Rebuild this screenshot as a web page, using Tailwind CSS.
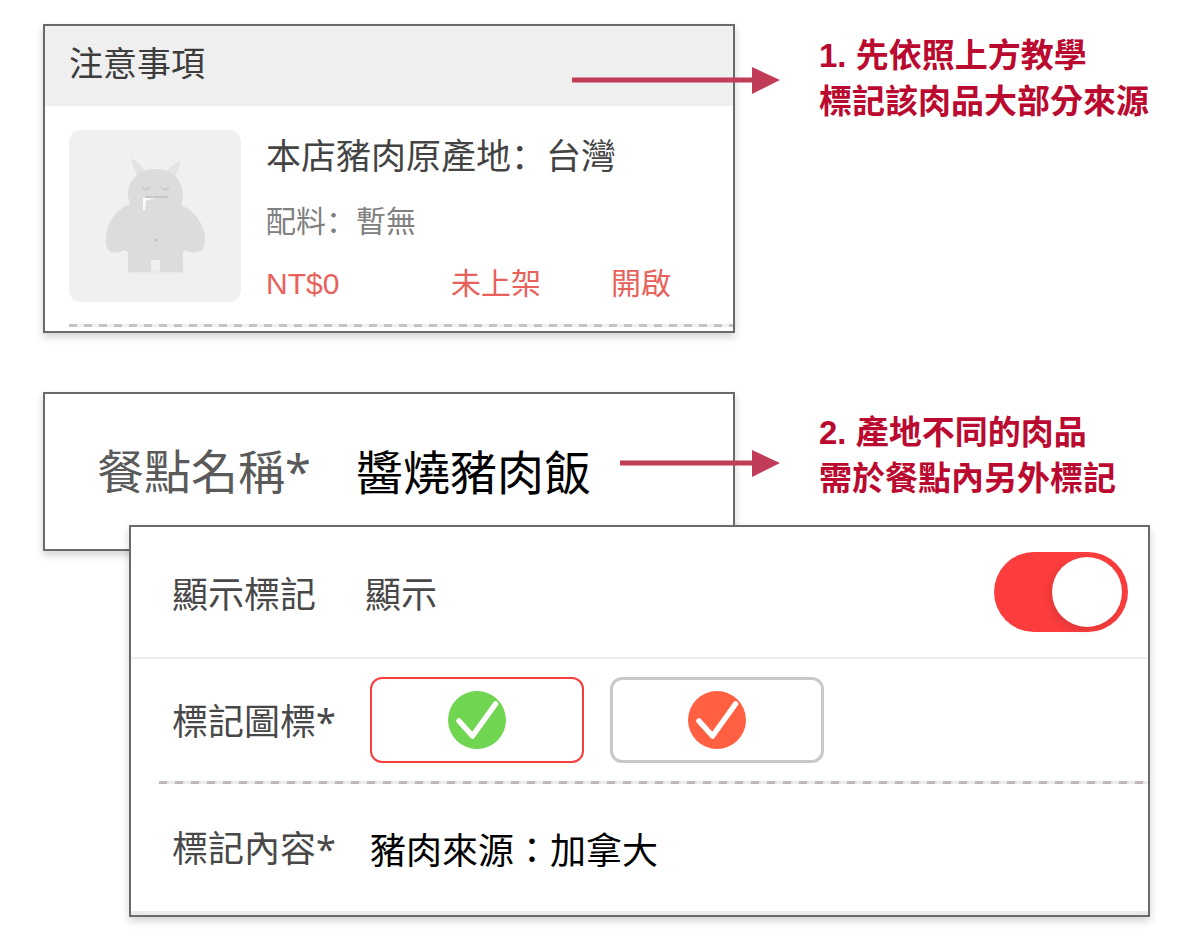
<!DOCTYPE html>
<html lang="zh-Hant">

<head>
  <meta charset="UTF-8">
  <meta name="viewport" content="width=device-width, initial-scale=1.0">
  <title>肉品來源標記教學</title>
  <script src="https://cdn.jsdelivr.net/npm/@tailwindcss/browser@4"></script>
</head>

<body class="bg-white font-['Liberation_Sans','Noto_Sans_CJK_TC',sans-serif]">
  <main class="pt-6 pb-4 pl-[43px] pr-[50px]">

    <!-- Step 1 -->
    <section class="flex gap-[84px]">
      <div class="relative flex-1 border-2 border-[#6a6a6c] bg-white shadow-[0_4px_8px_rgba(0,0,0,0.18)]">
        <h2 class="flex h-20 items-center bg-[#efefef] pb-1 pl-6 text-[34px] leading-10 text-[#3c3c3c]">注意事項</h2>
        <div class="ml-6 flex gap-[25px] pt-6 pb-5">
          <svg class="size-[172px] shrink-0 rounded-xl bg-[#f0f0f0]" viewBox="0 0 172 172" aria-hidden="true">
            <ellipse cx="86" cy="142" rx="32" ry="2" fill="#e9e9e9" />
            <path d="M62 28 Q70 32 77 42 L69 47 Q65 40 62 28Z M112 31 Q104 33 97 42 L104 48 Q110 42 112 31Z" fill="#e3e3e3" />
            <path d="M87 39 C104 39 114 51 114 65 Q114 70 112 75 C127 81 136 97 136 108 Q136 117 132 121 Q122 125 116 120 L114 122 V142 H91 V130 H82 V142 H59 V122 L56 120 Q47 125 40 121 Q36 116 37 106 C38 92 48 79 61 74 Q59 69 59 65 C59 50 70 39 87 39Z" fill="#dcdcdc" />
            <path d="M73 57 Q77 62 81 57 M92 57 Q96 62 100 57" fill="none" stroke="#c9c9c9" stroke-width="2" />
            <path d="M77 67 H99" stroke="#c6c6c6" stroke-width="2" />
            <path d="M74 68 H86 L77 71 L76 80 H74Z" fill="#fafafa" />
            <circle cx="87" cy="110" r="1.5" fill="#bebebe" />
          </svg>
          <div class="flex-1 pt-[2px]">
            <h3 class="text-[35px] leading-[44px] text-[#444]">本店豬肉原產地<span class="font-['Noto_Sans_CJK_SC']" lang="zh-Hans">：</span>台灣</h3>
            <p class="mt-5 text-[30px] leading-10 text-[#808080]">配料<span class="font-['Noto_Sans_CJK_SC']" lang="zh-Hans">：</span>暫無</p>
            <div class="mt-[22px] grid h-10 grid-cols-[185px_160px_auto] justify-items-start text-[30px] leading-10 text-[#e9615b]">
              <span>NT$0</span>
              <button type="button">未上架</button>
              <button type="button">開啟</button>
            </div>
          </div>
        </div>
        <div class="ml-6 h-[3px] bg-[repeating-linear-gradient(90deg,#c4c4c4_0_8px,#f0f0f0_8px_15px)]"></div>
        <div class="h-1"></div>
        <svg class="absolute top-10 -right-[47px] h-7 w-[208px]" viewBox="0 0 208 28" aria-hidden="true">
          <path d="M0 11.500H180V1L208 14L180 28V16.500H0Z" fill="#c03c57" />
        </svg>
      </div>
      <p class="w-[331px] pt-[9px] text-[33px] leading-[46px] font-bold whitespace-nowrap text-[#bb0a30]">1. 先依照上方教學<br>標記該肉品大部分來源</p>
    </section>

    <!-- Step 2 -->
    <section class="mt-[59px] flex gap-[84px]">
      <div class="relative h-[159px] flex-1 border-2 border-[#6a6a6c] bg-white shadow-[0_4px_8px_rgba(0,0,0,0.18)]">
        <div class="flex h-full items-center pb-1 pl-[52px] font-['Noto_Sans_CJK_TC',sans-serif] text-[47px] leading-[60px]">
          <label for="meal" class="w-[259px] shrink-0 text-[#5a5a5a]">餐點名稱<span class="font-['Noto_Sans']">*</span></label>
          <input id="meal" type="text" value="醬燒豬肉飯" class="w-[260px] text-black outline-none">
        </div>
        <svg class="absolute top-[55px] -right-[47px] h-7 w-40" viewBox="0 0 160 28" aria-hidden="true">
          <path d="M0 11.500H132V1L160 14L132 28V16.500H0Z" fill="#c03c57" />
        </svg>
      </div>
      <p class="w-[331px] pt-[18px] text-[33px] leading-[46px] font-bold whitespace-nowrap text-[#bb0a30]">2. 產地不同的肉品<br>需於餐點內另外標記</p>
    </section>

    <!-- Mark settings -->
    <form class="relative -mt-[26px] ml-[86px] border-2 border-[#6a6a6c] bg-white font-['Noto_Sans_CJK_TC',sans-serif] text-[36px] leading-[48px] text-[#484848] shadow-[0_4px_8px_rgba(0,0,0,0.18)]">
      <div class="flex h-[132px] items-center border-b-2 border-[#efefef] pr-5 pl-[41px]">
        <label for="show-mark" class="w-[193px]">顯示標記</label>
        <span class="flex-1">顯示</span>
        <input id="show-mark" type="checkbox" role="switch" checked class="flex h-20 w-[134px] appearance-none items-center rounded-full bg-[#c8c8c8] px-[6px] before:size-[70px] before:rounded-full before:bg-white before:shadow-[-2px_3px_8px_rgba(0,0,0,0.12)] checked:justify-end checked:bg-[#fc3d3e]">
      </div>

      <div role="radiogroup" aria-labelledby="mark-icon" class="flex h-[122px] items-center pl-[41px]">
        <span id="mark-icon" class="w-[198px] shrink-0">標記圖標<span class="font-['Noto_Sans']">*</span></span>
        <div class="flex gap-[26px]">
          <label class="relative flex h-[86px] w-[214px] items-center justify-center" aria-label="綠色標記">
            <input type="radio" name="mark" checked class="absolute inset-0 appearance-none rounded-xl border-[3px] border-[#c9c9c9] checked:border-2 checked:border-[#fa3c3d]">
            <svg class="size-[58px]" viewBox="0 0 58 58" aria-hidden="true">
              <circle cx="29" cy="29" r="29" fill="#70d550" />
              <path d="M11 30L24.500 45L47.500 13" fill="none" stroke="#fff" stroke-width="5.500" stroke-linecap="round" stroke-linejoin="round" />
            </svg>
          </label>
          <label class="relative flex h-[86px] w-[214px] items-center justify-center" aria-label="橘色標記">
            <input type="radio" name="mark" class="absolute inset-0 appearance-none rounded-xl border-[3px] border-[#c9c9c9] checked:border-2 checked:border-[#fa3c3d]">
            <svg class="size-[58px]" viewBox="0 0 58 58" aria-hidden="true">
              <circle cx="29" cy="29" r="29" fill="#ff6042" />
              <path d="M11 30L24.500 45L47.500 13" fill="none" stroke="#fff" stroke-width="5.500" stroke-linecap="round" stroke-linejoin="round" />
            </svg>
          </label>
        </div>
      </div>
      <div class="ml-7 h-[3px] bg-[repeating-linear-gradient(90deg,#c0b8b8_0_8px,#ececec_8px_16px)]"></div>

      <div class="flex h-[131px] items-center border-b-4 border-[#ebebeb] pl-[41px]">
        <label for="mark-text" class="w-[198px] shrink-0">標記內容<span class="font-['Noto_Sans']">*</span></label>
        <input id="mark-text" type="text" value="豬肉來源：加拿大" class="min-w-0 flex-1 text-black outline-none">
      </div>
    </form>
  </main>
</body>

</html>
